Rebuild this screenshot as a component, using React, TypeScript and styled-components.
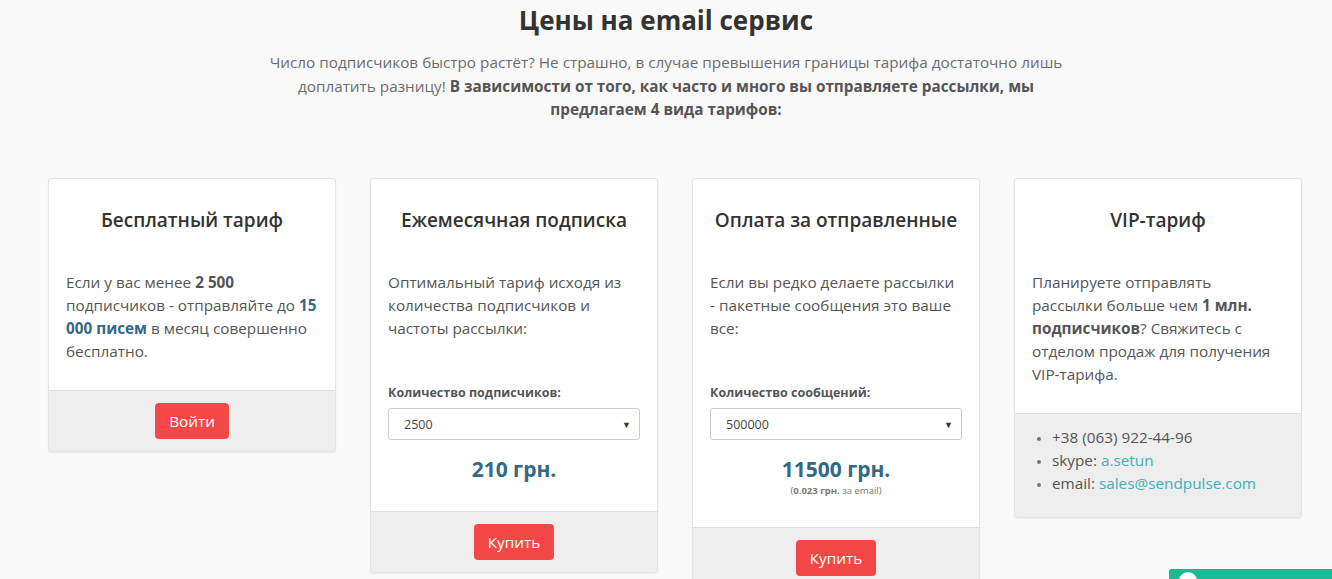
import React from "react";
import styled, { createGlobalStyle } from "styled-components";

const GlobalStyle = createGlobalStyle`
  html, body {
    margin: 0;
    padding: 0;
    background: #f9f9f9;
    font-family: "Open Sans", "Liberation Sans", sans-serif;
    color: #555;
  }
  * { box-sizing: border-box; }
`;

const Page = styled.div`
  padding: 0 48px;
  min-height: 579px;
`;

const Title = styled.h1`
  margin: 0;
  padding-top: 2px;
  text-align: center;
  font-size: 26px;
  line-height: 36px;
  font-weight: 700;
  color: #333;
`;

const Lead = styled.p`
  margin: 13px auto 0;
  max-width: 820px;
  text-align: center;
  font-size: 15.3px;
  line-height: 23.5px;
  font-weight: 400;
  color: #6c6c6c;

  b {
    font-weight: 700;
    color: #555;
  }
`;

const Grid = styled.div`
  margin-top: 56px;
  display: grid;
  grid-template-columns: repeat(4, 288px);
  column-gap: 34px;
  align-items: start;
`;

const Card = styled.div`
  background: #fff;
  border: 1px solid #e4e4e4;
  border-radius: 3px;
  box-shadow: 0 1px 2px rgba(0, 0, 0, 0.06);
  overflow: hidden;
`;

const CardBody = styled.div<{ $bottom?: number }>`
  padding: 29px 17px ${(p) => p.$bottom ?? 27}px;
`;

const CardTitle = styled.h3`
  margin: 0 0 38px;
  text-align: center;
  font-size: 19px;
  line-height: 25px;
  font-weight: 600;
  color: #333;
`;

const Text = styled.p`
  margin: 0;
  font-size: 15.3px;
  line-height: 23.2px;
  color: #555;

  b {
    font-weight: 700;
  }
  b.blue {
    color: #336886;
  }
`;

const Label = styled.div`
  margin-top: 44px;
  font-size: 12.5px;
  line-height: 18px;
  font-weight: 700;
  color: #555;
`;

const SelectBox = styled.div`
  margin-top: 6px;
  height: 32px;
  border: 1px solid #ccc;
  border-radius: 3px;
  display: flex;
  align-items: center;
  justify-content: space-between;
  padding: 0 8px 0 15px;
  font-size: 12.5px;
  color: #444;
`;

const Caret = styled.span`
  font-size: 9px;
  color: #333;
`;

const Price = styled.div`
  margin-top: 15px;
  text-align: center;
  font-size: 21px;
  line-height: 28px;
  font-weight: 700;
  color: #336886;
`;

const PriceNote = styled.div`
  margin-top: 1px;
  text-align: center;
  font-size: 9.5px;
  line-height: 14px;
  color: #777;

  b {
    font-weight: 700;
  }
`;

const Footer = styled.div`
  background: #eee;
  border-top: 1px solid #e0e0e0;
  padding: 12px 17px 12px;
  display: flex;
  justify-content: center;
`;

const RedButton = styled.button`
  height: 36px;
  padding: 0 14px;
  border: none;
  border-radius: 4px;
  background: #f44848;
  color: #fff;
  font-family: "Open Sans", "Liberation Sans", sans-serif;
  font-size: 15.3px;
  cursor: pointer;
`;

const ContactFooter = styled.div`
  background: #eee;
  border-top: 1px solid #e0e0e0;
  padding: 12px 17px 22px;
`;

const ContactList = styled.ul`
  margin: 0;
  padding-left: 20px;
  font-size: 15.3px;
  line-height: 23.2px;
  color: #555;

  li::marker {
    color: #777;
    font-size: 12px;
  }
`;

const Link = styled.a`
  color: #3cb2b8;
  text-decoration: none;
`;

const ChatTab = styled.div`
  position: fixed;
  right: 0;
  bottom: 0;
  width: 163px;
  height: 10px;
  background: #1cb994;
  overflow: hidden;
  border-top-left-radius: 2px;
`;

const ChatDot = styled.span`
  position: absolute;
  left: 10px;
  top: 3px;
  width: 18px;
  height: 18px;
  border-radius: 50%;
  background: #fff;
`;

export default function App() {
  return (
    <>
      <GlobalStyle />
      <Page>
        <Title>Цены на email сервис</Title>
        <Lead>
          Число подписчиков быстро растёт? Не страшно, в случае превышения границы тарифа
          достаточно лишь доплатить разницу!{" "}
          <b>В зависимости от того, как часто и много вы отправляете рассылки, мы предлагаем 4 вида тарифов:</b>
        </Lead>
        <Grid>
          <Card>
            <CardBody>
              <CardTitle>Бесплатный тариф</CardTitle>
              <Text>
                Если у вас менее <b>2 500</b> подписчиков - отправляйте до{" "}
                <b className="blue">15 000 писем</b> в месяц совершенно бесплатно.
              </Text>
            </CardBody>
            <Footer>
              <RedButton>Войти</RedButton>
            </Footer>
          </Card>
          <Card>
            <CardBody $bottom={28}>
              <CardTitle>Ежемесячная подписка</CardTitle>
              <Text>Оптимальный тариф исходя из количества подписчиков и частоты рассылки:</Text>
              <Label>Количество подписчиков:</Label>
              <SelectBox>
                2500 <Caret>▼</Caret>
              </SelectBox>
              <Price>210 грн.</Price>
            </CardBody>
            <Footer>
              <RedButton>Купить</RedButton>
            </Footer>
          </Card>
          <Card>
            <CardBody $bottom={29}>
              <CardTitle>Оплата за отправленные</CardTitle>
              <Text>Если вы редко делаете рассылки - пакетные сообщения это ваше все:</Text>
              <Label>Количество сообщений:</Label>
              <SelectBox>
                500000 <Caret>▼</Caret>
              </SelectBox>
              <Price>11500 грн.</Price>
              <PriceNote>
                (<b>0.023 грн.</b> за email)
              </PriceNote>
            </CardBody>
            <Footer>
              <RedButton>Купить</RedButton>
            </Footer>
          </Card>
          <Card>
            <CardBody $bottom={26}>
              <CardTitle>VIP-тариф</CardTitle>
              <Text>
                Планируете отправлять рассылки больше чем <b>1 млн. подписчиков</b>? Свяжитесь с
                отделом продаж для получения VIP-тарифа.
              </Text>
            </CardBody>
            <ContactFooter>
              <ContactList>
                <li>+38 (063) 922-44-96</li>
                <li>
                  skype: <Link href="#">a.setun</Link>
                </li>
                <li>
                  email: <Link href="#">sales@sendpulse.com</Link>
                </li>
              </ContactList>
            </ContactFooter>
          </Card>
        </Grid>
      </Page>
      <ChatTab>
        <ChatDot />
      </ChatTab>
    </>
  );
}
